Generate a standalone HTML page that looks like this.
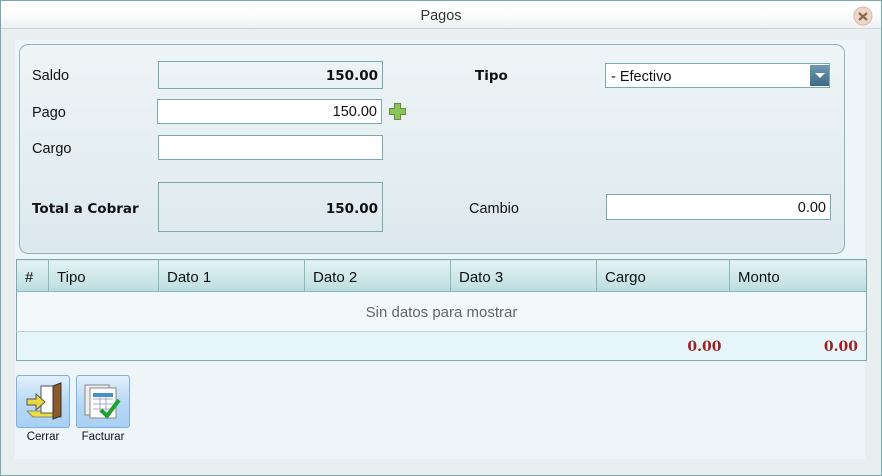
<!DOCTYPE html>
<html><head><meta charset="utf-8"><style>
*{box-sizing:border-box;margin:0;padding:0}
body{width:882px;height:476px;overflow:hidden;font-family:"DejaVu Sans","Liberation Sans",sans-serif;font-size:13px;color:#111}
#win{position:absolute;left:0;top:0;width:882px;height:476px;border:1px solid #79a8ae;background:#e9eff1}
#title{position:absolute;left:0;top:0;width:880px;height:28px;background:linear-gradient(#fff 0,#fff 40%,#eef1f2 100%);border-bottom:1px solid #cfd4d6;text-align:center;line-height:30px;font-size:14.5px;color:#333;font-family:"Liberation Sans",sans-serif}
#content{position:absolute;left:15px;top:40px;width:850px;height:419px;background:#eef5f8}
.abs{position:absolute}
#grp{left:19px;top:44px;width:826px;height:210px;border:1px solid #8bb7bb;border-radius:9px;background:linear-gradient(#eef4f6,#dde9ef)}
.lbl{position:absolute;font-size:14.5px;font-family:"Liberation Sans",sans-serif}
.b{font-weight:bold;font-family:"DejaVu Sans",sans-serif;font-size:13.5px}
.box{position:absolute;border:1px solid #7aa9ae;text-align:right;padding-right:4px;font-size:14.5px;font-family:"Liberation Sans",sans-serif}
.w{background:#fff}
table{position:absolute;left:16px;top:259px;width:851px;border-collapse:collapse;border:1px solid #7aa9ae;font-family:"Liberation Sans",sans-serif;font-size:15px}
th{height:32px;font-weight:normal;text-align:left;padding-left:8px;padding-top:3px;background:linear-gradient(#e4f3f5,#bcdcdf);border-left:1px solid #8bb7bb;border-bottom:1px solid #8bb7bb}
td.e{height:40px;background:#f3f9fb;text-align:center;color:#666;border-bottom:1px solid #b8d4d8;padding-top:2px}
td.f{height:29px;background:#e6f5f9;text-align:right;padding-right:8px;padding-top:2px;color:#9a2222;font-weight:bold;font-family:"DejaVu Serif","Liberation Serif",serif;font-size:14px}
.btn{position:absolute;top:375px;width:54px;height:53px;border:1px solid #7fb0de;border-radius:3px;background:linear-gradient(#e2f0fc,#b9d9f5 50%,#a9d0f3)}
.bl{position:absolute;top:431px;font-size:11.5px;font-family:"Liberation Sans",sans-serif;text-align:center;width:60px}
</style></head><body>
<div id="win">
<div id="title">Pagos</div>
<svg class="abs" style="left:851px;top:4px" width="22" height="22" viewBox="0 0 22 22"><circle cx="11" cy="11" r="9" fill="#efd6cc" stroke="#dcb4a4"/><path d="M7 8L15 15M15 8L7 15" stroke="#8a6a40" stroke-width="2.2"/></svg>
</div>
<div id="content"></div>
<div id="grp" class="abs"></div>
<div class="lbl" style="left:32px;top:68px">Saldo</div>
<div class="box" style="left:158px;top:61px;width:225px;height:28px;line-height:28px"><span class="b">150.00</span></div>
<div class="lbl" style="left:32px;top:105px">Pago</div>
<div class="box w" style="left:157px;top:99px;width:225px;height:25px;line-height:25px">150.00</div>
<svg class="abs" style="left:388px;top:102px" width="19" height="19" viewBox="0 0 19 19"><path d="M6.5 1.5h6v5h5v6h-5v5h-6v-5h-5v-6h5z" fill="#8dc45a" stroke="#5f8f3a" stroke-width="1"/></svg>
<div class="lbl" style="left:32px;top:141px">Cargo</div>
<div class="box w" style="left:158px;top:135px;width:225px;height:25px"></div>
<div class="lbl b" style="left:32px;top:201px">Total a Cobrar</div>
<div class="box" style="left:158px;top:182px;width:225px;height:50px;line-height:52px"><span class="b">150.00</span></div>
<div class="lbl b" style="left:475px;top:68px">Tipo</div>
<div class="box w" style="left:605px;top:63px;width:225px;height:25px;text-align:left;padding-left:5px;line-height:26px">- Efectivo</div>
<div class="abs" style="left:810px;top:65px;width:19px;height:21px;background:linear-gradient(#6e9ab3,#3b6a86)"><div class="abs" style="left:5px;top:8px;border-left:5px solid transparent;border-right:5px solid transparent;border-top:5px solid #fff;width:0;height:0"></div></div>
<div class="lbl" style="left:469px;top:201px">Cambio</div>
<div class="box w" style="left:606px;top:194px;width:225px;height:26px;line-height:27px">0.00</div>
<table>
<tr><th style="width:32px;border-left:none">#</th><th style="width:110px">Tipo</th><th style="width:146px">Dato 1</th><th style="width:146px">Dato 2</th><th style="width:146px">Dato 3</th><th style="width:133px">Cargo</th><th>Monto</th></tr>
<tr><td class="e" colspan="7">Sin datos para mostrar</td></tr>
<tr><td class="f" colspan="6">0.00</td><td class="f">0.00</td></tr>
</table>
<div class="btn" style="left:16px"><svg width="52" height="51" viewBox="0 0 52 51"><path d="M10 35l28 0l6 6l-28 0z" fill="#e8e040" stroke="#888"/><rect x="24" y="10" width="12" height="27" fill="#fff" stroke="#555"/><path d="M36 10l8-3v33l-8 3z" fill="#8b5a2b" stroke="#333"/><path d="M10 23h9v-5l9 8-9 8v-5h-9z" fill="#e8d840" stroke="#555"/></svg></div>
<div class="bl" style="left:13px">Cerrar</div>
<div class="btn" style="left:76px"><svg width="52" height="51" viewBox="0 0 52 51"><rect x="8" y="9" width="24" height="30" fill="#eee" stroke="#888"/><rect x="13" y="12" width="26" height="30" fill="#fff" stroke="#888"/><rect x="16" y="17" width="20" height="4" fill="#4a8ec8"/><path d="M16 23h20M16 28h20M16 33h20M23 21v16M29 21v16" stroke="#aac" /><path d="M24 34l6 6 12-16" stroke="#20a030" stroke-width="4" fill="none"/></svg></div>
<div class="bl" style="left:73px">Facturar</div>
</body></html>
